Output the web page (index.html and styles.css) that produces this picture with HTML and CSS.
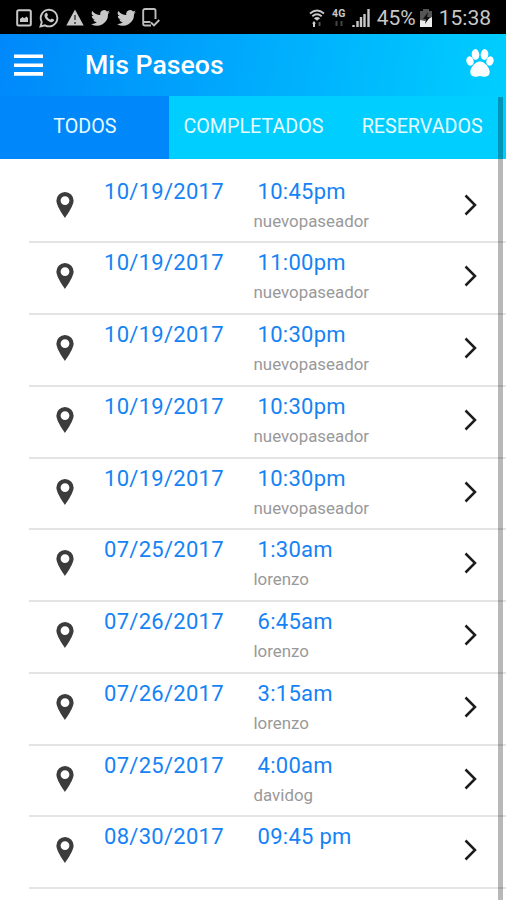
FILE: index.html
```html
<!DOCTYPE html>
<html lang="es">
<head>
    <meta charset="UTF-8">
    <meta name="viewport" content="width=device-width, initial-scale=1.0">
    <title>Mis Paseos</title>
    <link rel="stylesheet" href="styles.css">
</head>
<body>
    <!-- Phone status bar -->
    <div class="status-bar">
        <div class="status-left">
            <svg width="16" height="18" viewBox="0 0 16 18"><rect x="1.2" y="1.2" width="13.6" height="15.4" rx="1.5" fill="none" stroke="#c8c8c8" stroke-width="2"/><path d="M4 13V10l2.5-2 1.8 1.3L10.500 7.500 12 9v4z" fill="#c8c8c8"/></svg>
            <svg class="icon-whatsapp" width="20" height="20" viewBox="0 0 20 20"><path d="M1.500 18.500l1.300-4.400A8.300 8.300 0 1 1 6 17.300z" fill="none" stroke="#c8c8c8" stroke-width="1.900"/><path d="M6.500 5.200c.7-.7 1.500-.6 1.800.2l.7 1.700-.9 1.300c.7 1.500 1.900 2.600 3.400 3.200l1.300-1.200 2 1c.5.400.4 1-.1 1.700-.8 1-2.100 1.300-3.500.8-2.800-.9-4.900-3-5.600-5.500-.3-1.200 0-2.400.9-3.200z" fill="#c8c8c8"/></svg>
            <svg class="icon-warning" width="18" height="17" viewBox="0 0 18 17"><path d="M9 .5L17.700 16.500H.3z" fill="#c8c8c8"/><path d="M9 6v5M9 13v2" stroke="#444" stroke-width="1.600"/></svg>
            <svg class="icon-bird" width="19" height="16" viewBox="0 0 24 20"><path d="M24 2.400a10 10 0 0 1-2.800.8A5 5 0 0 0 23.300.500a10 10 0 0 1-3.100 1.200 4.900 4.900 0 0 0-8.400 4.500A14 14 0 0 1 1.700 1a4.900 4.900 0 0 0 1.500 6.600A5 5 0 0 1 1 7v.1a4.900 4.900 0 0 0 3.900 4.800 5 5 0 0 1-2.200.1 4.900 4.900 0 0 0 4.600 3.400A9.900 9.900 0 0 1 0 17.500 14 14 0 0 0 21.500 5z" fill="#c8c8c8"/></svg>
            <svg class="icon-bird" width="19" height="16" viewBox="0 0 24 20"><path d="M24 2.400a10 10 0 0 1-2.800.8A5 5 0 0 0 23.300.500a10 10 0 0 1-3.100 1.200 4.900 4.900 0 0 0-8.400 4.500A14 14 0 0 1 1.700 1a4.900 4.900 0 0 0 1.500 6.600A5 5 0 0 1 1 7v.1a4.900 4.900 0 0 0 3.900 4.800 5 5 0 0 1-2.200.1 4.900 4.900 0 0 0 4.600 3.400A9.900 9.900 0 0 1 0 17.500 14 14 0 0 0 21.500 5z" fill="#c8c8c8"/></svg>
            <svg class="icon-device" width="18" height="19" viewBox="0 0 18 19"><path d="M13.500 11V2.500Q13.500 1 12 1H3Q1.200 1 1.200 2.500v13.500q0 1.500 1.800 1.500h6M1.500 14h7" fill="none" stroke="#bdbdbd" stroke-width="1.900"/><path d="M9 14.500l3 3 5.300-5.500" fill="none" stroke="#bdbdbd" stroke-width="1.900"/></svg>
        </div>
        <div class="status-right">
            <svg class="icon-wifi" width="16" height="18" viewBox="0 0 16 18"><path d="M1 4.500Q8-1.500 15 4.500M3.300 7.300Q8 3.300 12.700 7.300M5.600 10Q8 7.800 10.400 10" fill="none" stroke="#c8c8c8" stroke-width="1.800"/><path d="M6 9h4l-2 3zM3 14.500l2-2.500 2 2.500H6V18H4v-3.500z" fill="#d0d0d0"/><path d="M10.500 13v4" stroke="#555" stroke-width="2"/></svg>
            <div class="network">
                <span>4G</span>
                <svg width="10" height="5" viewBox="0 0 10 5"><path d="M2.500 0v5M7.500 0v5" stroke="#444" stroke-width="2"/></svg>
            </div>
            <svg class="icon-signal" width="18" height="18" viewBox="0 0 18 18"><path d="M1.500 16v2M5.500 12v6M9 8v10M12.500 5v13M16.500 0v18" stroke="#c8c8c8" stroke-width="2.400"/></svg>
            <span class="battery-text">45%</span>
            <svg class="icon-battery" width="12" height="18" viewBox="0 0 12 18"><path d="M0 2h3V0h6v2h3v16H0z" fill="#555"/><path d="M0 11l5 1 7-4v10H0z" fill="#eee"/><path d="M8 3L3 10h3l-1 5 5-7H7z" fill="#111"/></svg>
            <span class="clock">15:38</span>
        </div>
    </div>

    <!-- Title bar -->
    <header class="app-header">
        <svg class="menu-icon" width="29" height="23" viewBox="0 0 29 23"><path d="M0 2.200h29M0 11.200h29M0 19.900h29" stroke="#fff" stroke-width="3.600"/></svg>
        <h1>Mis Paseos</h1>
        <svg class="paw-icon" width="28" height="28" viewBox="0 0 28 28" fill="#fff"><ellipse cx="9.500" cy="5.500" rx="3.800" ry="5.400" transform="rotate(-6 9.500 5.500)"/><ellipse cx="18.500" cy="5.500" rx="3.800" ry="5.400" transform="rotate(6 18.500 5.500)"/><ellipse cx="4" cy="12" rx="3.600" ry="4.800" transform="rotate(-16 4 12)"/><ellipse cx="24" cy="12" rx="3.600" ry="4.800" transform="rotate(16 24 12)"/><path d="M14 12.600c4.800 0 9.700 6 9.700 10.500 0 2.900-1.900 4.600-4.700 4.600-2 0-3.200-.8-5-.8s-3 .8-5 .8c-2.800 0-4.700-1.700-4.700-4.600 0-4.500 4.900-10.500 9.700-10.500z"/></svg>
    </header>

    <!-- Tabs -->
    <nav class="tabs">
        <div class="tab active">TODOS</div>
        <div class="tab">COMPLETADOS</div>
        <div class="tab">RESERVADOS</div>
    </nav>

    <!-- Walks, filled in below -->
    <div class="walk-list" id="walkList"></div>

    <div class="scrollbar"></div>

    <script>
        var walks = [
            ['10/19/2017', '10:45pm', 'nuevopaseador'],
            ['10/19/2017', '11:00pm', 'nuevopaseador'],
            ['10/19/2017', '10:30pm', 'nuevopaseador'],
            ['10/19/2017', '10:30pm', 'nuevopaseador'],
            ['10/19/2017', '10:30pm', 'nuevopaseador'],
            ['07/25/2017', '1:30am', 'lorenzo'],
            ['07/26/2017', '6:45am', 'lorenzo'],
            ['07/26/2017', '3:15am', 'lorenzo'],
            ['07/25/2017', '4:00am', 'davidog'],
            ['08/30/2017', '09:45 pm', '']
        ];

        var pin = '<svg class="pin" width="18" height="26" viewBox="0 0 18 26"><path fill-rule="evenodd" d="M9 0a8.600 8.600 0 0 1 8.600 8.600C17.600 14.500 9 26 9 26S.4 14.500.4 8.600A8.600 8.600 0 0 1 9 0zm0 4.200a4.400 4.400 0 1 0 0 8.800 4.400 4.400 0 0 0 0-8.800z" fill="#3c3c3c"/></svg>';
        var chevron = '<svg class="chevron" width="14" height="22" viewBox="0 0 14 22"><path d="M1.500 1.500L11 11 1.500 20.500" fill="none" stroke="#1c1c1c" stroke-width="2.500"/></svg>';

        document.getElementById('walkList').innerHTML = walks.map(function(walk) {
            return '<div class="walk">' + pin +
                '<span class="date">' + walk[0] + '</span>' +
                '<div class="info"><span class="time">' + walk[1] + '</span>' +
                '<span class="walker">' + walk[2] + '</span></div>' +
                chevron + '</div>';
        }).join('');
    </script>
</body>
</html>
```
FILE: styles.css
```css
* {
    box-sizing: border-box;
}

body {
    font-family: Roboto, sans-serif;
    margin: 0;
    height: 900px;
    overflow: hidden;
    background-color: #fff;
}

svg {
    display: block;
    flex-shrink: 0;
}

.status-bar {
    height: 34px;
    padding: 1px 15px 0 16px;
    display: flex;
    justify-content: space-between;
    align-items: center;
    background-color: #000;
    color: #c8c8c8;
}

.status-left,
.status-right {
    display: flex;
    align-items: center;
}

.icon-whatsapp,
.icon-warning,
.icon-bird {
    margin-left: 7px;
}

.icon-device {
    margin-left: 6px;
}

.network {
    width: 14px;
    margin-left: 7px;
    display: flex;
    flex-direction: column;
    align-items: center;
    gap: 2px;
    font-size: 10.5px;
    font-weight: bold;
    line-height: 10px;
}

.icon-signal {
    margin-left: 6px;
}

.battery-text {
    margin-left: 7px;
    font-size: 21px;
}

.icon-battery {
    margin-left: 4px;
}

.clock {
    margin-left: 7px;
    font-size: 21px;
}

.app-header {
    height: 62px;
    padding: 0 12px 0 14px;
    display: flex;
    align-items: center;
    background: linear-gradient(100deg, #0088fa, #00ceff);
}

h1 {
    flex: 1;
    margin: 0 0 0 42px;
    font-size: 26.7px;
    font-weight: 500;
    line-height: 32px;
    color: #fff;
}

.paw-icon {
    margin-bottom: 4px;
}

.tabs {
    height: 63px;
    display: grid;
    grid-template-columns: repeat(3, 1fr);
    background-color: #00ceff;
}

.tab {
    display: flex;
    justify-content: center;
    align-items: center;
    padding: 0 0 2px 1px;
    font-size: 19.7px;
    color: #e6fbff;
}

.tab.active {
    background-color: #0088fa;
}

.walk-list {
    margin: 12.6px 0 0 29px;
}

.walk {
    height: 71.75px;
    padding: 0 28px 0 27px;
    display: flex;
    align-items: flex-start;
    border-bottom: 2px solid #e4e4e4;
}

.pin {
    margin-top: 20px;
}

.date {
    width: 149.5px;
    margin: 7px 0 0 30px;
}

.date,
.time {
    font-size: 22px;
    line-height: 26px;
    letter-spacing: 0.28px;
    color: #1583f5;
}

.info {
    flex: 1;
    margin-top: 7px;
    display: flex;
    flex-direction: column;
}

.time {
    padding-left: 4px;
}

.walker {
    margin-top: 6px;
    font-size: 16.9px;
    line-height: 20px;
    color: #999;
}

.chevron {
    margin-top: 22px;
}

/* Overlay scroll indicator */
.scrollbar {
    position: absolute;
    top: 97px;
    right: 3px;
    bottom: 0;
    width: 5px;
    background-color: rgba(0, 0, 0, 0.28);
}
```
